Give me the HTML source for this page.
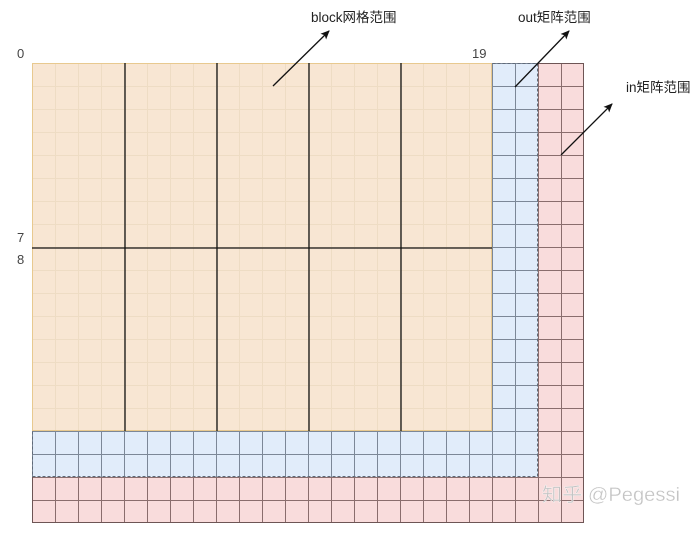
<!DOCTYPE html>
<html><head><meta charset="utf-8"><style>
html,body{margin:0;padding:0;background:#fff;width:699px;height:544px;overflow:hidden}
svg{display:block}
text{font-family:"Liberation Sans","Noto Sans CJK SC",sans-serif}
</style></head><body>
<svg width="699" height="544" viewBox="0 0 699 544" xmlns="http://www.w3.org/2000/svg">
<defs>
<pattern id="pk" x="32" y="63" width="23" height="23" patternUnits="userSpaceOnUse">
<rect width="23" height="23" fill="#f9dcdc"/>
<path d="M0 0.5H23M0.5 0V23" stroke="#8a6d6d" stroke-width="1" fill="none"/>
</pattern>
<pattern id="bl" x="32" y="63" width="23" height="23" patternUnits="userSpaceOnUse">
<rect width="23" height="23" fill="#e1ecfa"/>
<path d="M0 0.5H23M0.5 0V23" stroke="#7c8797" stroke-width="1" fill="none"/>
</pattern>
<pattern id="or" x="32" y="63" width="23" height="23" patternUnits="userSpaceOnUse">
<rect width="23" height="23" fill="#f8e6d3"/>
<path d="M0 0.5H23M0.5 0V23" stroke="#eedcc4" stroke-width="1" fill="none"/>
</pattern>
<marker id="ah" markerWidth="10" markerHeight="10" refX="8" refY="5" orient="auto" markerUnits="userSpaceOnUse">
<path d="M0 1L9 5L0 9L2 5Z" fill="#111"/>
</marker>
</defs>
<rect x="32" y="63" width="552" height="460" fill="url(#pk)"/>
<rect x="32.5" y="63.5" width="551" height="459" fill="none" stroke="#6e5555"/>
<rect x="32" y="63" width="506" height="414" fill="url(#bl)"/>
<rect x="32.5" y="63.5" width="505" height="413" fill="none" stroke="#5f6a78" stroke-dasharray="3 2"/>
<rect x="32" y="63" width="460" height="368" fill="url(#or)"/>
<rect x="32.5" y="63.5" width="459" height="367" fill="none" stroke="#e8c98f"/>
<g stroke="#111" stroke-width="1.3">
<path d="M125 63V431M217 63V431M309 63V431M401 63V431M32 248H492"/>
</g>
<g stroke="#111" stroke-width="1.3" fill="none">
<line x1="273" y1="86" x2="329" y2="31" marker-end="url(#ah)"/>
<line x1="515" y1="87" x2="569" y2="31" marker-end="url(#ah)"/>
<line x1="561" y1="155" x2="612" y2="104" marker-end="url(#ah)"/>
</g>
<g font-size="13.5" fill="#222">
<text x="311" y="22">block网格范围</text>
<text x="518" y="22">out矩阵范围</text>
<text x="626" y="92">in矩阵范围</text>
</g>
<g font-size="13" fill="#444">
<text x="17" y="58">0</text>
<text x="472" y="58">19</text>
<text x="17" y="242">7</text>
<text x="17" y="264">8</text>
</g>
<text x="542" y="501" font-size="19" fill="#c4c4c4" stroke="#fff" stroke-width="0.3" textLength="138" lengthAdjust="spacingAndGlyphs">知乎 @Pegessi</text>
</svg>
</body></html>
